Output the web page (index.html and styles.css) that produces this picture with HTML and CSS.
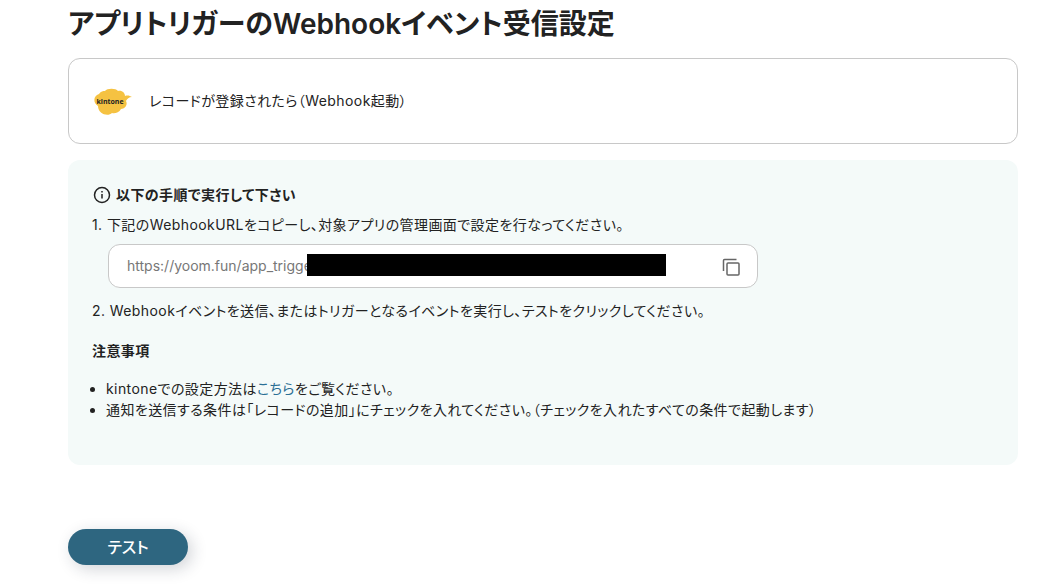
FILE: index.html
```html
<!DOCTYPE html>
<html lang="ja">
<head>
<meta charset="utf-8">
<title>Webhookイベント受信設定</title>
<link rel="stylesheet" href="styles.css">
</head>
<body>
<main class="page">
  <h1 class="title">アプリトリガーのWebhookイベント受信設定</h1>
  <section class="app-card">
    <svg class="logo" viewBox="0 0 40 30" role="img" aria-label="kintone"><path fill="#f5c242" d="M5 20C0 17 0 10 6 8C8 5 10 5 12 5C14 2 23 2 25 5C29 4 32 7 32 10C35 9 37 10 39 11C36 11 34 13 33 15C35 19 32 23 28 23C26 27 21 28 19 27C15 31 5 28 5 20Z"/><text class="logo-text" x="17" y="18">kintone</text></svg>
    <span>レコードが登録されたら（Webhook起動）</span>
  </section>
  <section class="guide">
    <h2 class="guide-title"><svg class="info" viewBox="0 0 20 20" aria-hidden="true"><circle cx="10" cy="10" r="7.5"/><path d="M10 9v4.5M10 6v1.5"/></svg>以下の手順で実行して下さい</h2>
    <p class="step"><label for="url">1. 下記のWebhookURLをコピーし、対象アプリの管理画面で設定を行なってください。</label></p>
    <div class="url-box">
      <input class="url" id="url" type="text" value="https://yoom.fun/app_trigger" readonly>
      <span class="redaction"></span>
      <button class="copy" type="button" aria-label="コピー"><svg class="copy-icon" viewBox="0 0 20 20" aria-hidden="true"><path d="M2.5 15V4.5Q2.5 3.5 3.5 3.5H15.5"/><rect x="6" y="7" width="12" height="12" rx="1"/></svg></button>
    </div>
    <p class="step">2. Webhookイベントを送信、またはトリガーとなるイベントを実行し、テストをクリックしてください。</p>
    <h3 class="notes-title">注意事項</h3>
    <ul class="notes">
      <li>kintoneでの設定方法は<a class="link" href="#">こちら</a>をご覧ください。</li>
      <li>通知を送信する条件は「レコードの追加」にチェックを入れてください。（チェックを入れたすべての条件で起動します）</li>
    </ul>
  </section>
  <button class="test" type="button">テスト</button>
</main>
</body>
</html>
```
FILE: styles.css
```css
* { box-sizing: border-box; }
body { margin: 0; background: #fff; color: #222; font: 14px/20px Inter, "Noto Sans CJK JP", sans-serif; font-feature-settings: "palt"; letter-spacing: 0.03em; }
.page { padding: 4px 38px 20px 68px; }
.title { margin: 0 0 14px; font-size: 28px; line-height: 40px; font-weight: 600; letter-spacing: normal; }
.app-card { display: flex; align-items: center; gap: 16px; min-height: 86px; padding: 0 24px; border: 1px solid #c8c8c8; border-radius: 12px; }
.logo { width: 40px; height: 30px; }
.logo-text { font: 700 7px "Open Sans", sans-serif; text-anchor: middle; letter-spacing: 0; fill: #222; }
.guide { margin-top: 16px; padding: 24px 24px 45px; border-radius: 12px; background: #f4faf9; }
.guide-title { display: flex; align-items: center; gap: 4px; margin: 0 0 9px; font-size: 14px; line-height: 22px; font-weight: 600; }
.info { width: 20px; height: 20px; fill: none; stroke: #222; stroke-width: 1.5; }
.step { margin: 0; }
.url-box { display: flex; align-items: center; position: relative; min-height: 44px; max-width: 650px; margin: 9px 0 13px 16px; padding: 0 16px 0 18px; border: 1px solid #c8c8c8; border-radius: 12px; background: #fff; }
.url { flex: 1; min-width: 0; border: 0; padding: 0; outline: 0; background: none; color: #777; font: inherit; letter-spacing: normal; }
.redaction { position: absolute; left: 198px; top: 9px; width: 359px; height: 22px; background: #000; }
.copy { display: flex; padding: 0; border: 0; background: none; }
.copy-icon { width: 20px; height: 20px; fill: none; stroke: #666; stroke-width: 1.5; }
.notes-title { margin: 20px 0 17px; font-size: 14px; line-height: 20px; font-weight: 600; }
.notes { margin: 0; padding-left: 14px; line-height: 21px; }
.link { color: #2b6f95; text-decoration: none; }
.test { display: block; width: 120px; height: 36px; margin-top: 64px; border: 0; border-radius: 18px; background: #2e6680; color: #fff; font: 500 16px/24px Inter, "Noto Sans CJK JP", sans-serif; font-feature-settings: "palt"; box-shadow: 4px 4px 16px rgba(30,40,60,.2); }
```
